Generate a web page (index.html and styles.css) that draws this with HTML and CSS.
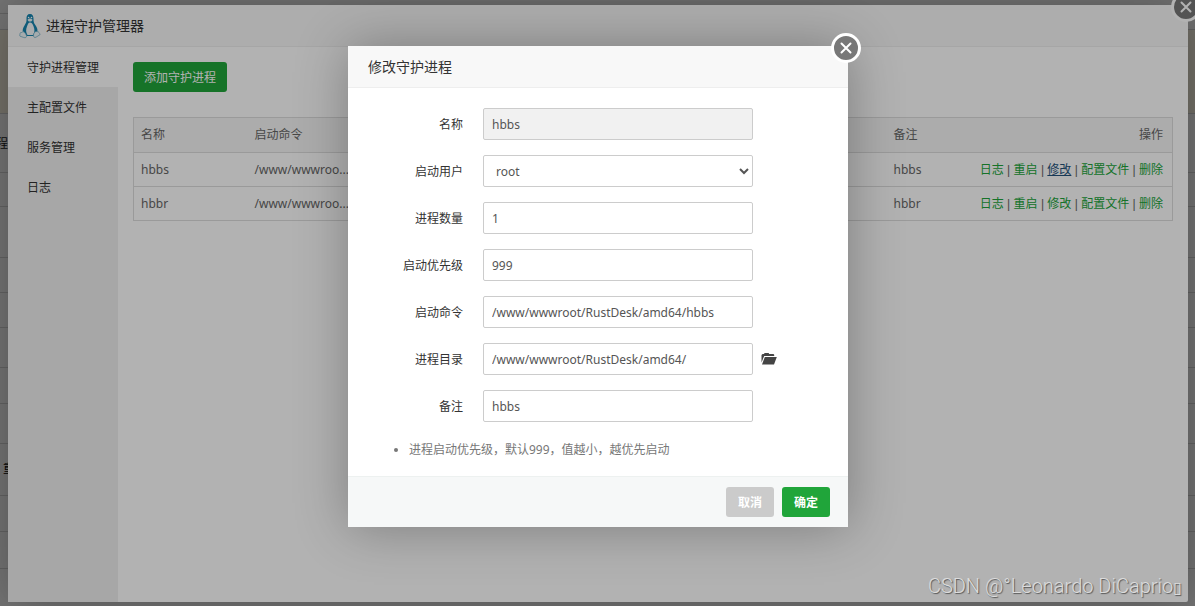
FILE: index.html
```html
<!DOCTYPE html>
<html lang="zh-CN">
<head>
<meta charset="utf-8">
<title>进程守护管理器</title>
<link rel="stylesheet" href="styles.css">
</head>
<body>
<div class="page" aria-hidden="true">
  <div class="row row-top"></div>
  <div class="row row-bar"></div>
  <div class="row row-notice"></div>
  <div class="row row-title">程</div>
  <div class="row row-34"></div>
  <div class="row row-51"></div>
  <div class="row row-35"></div>
  <div class="row row-35"></div>
  <div class="row row-40"></div>
  <div class="row row-36"></div>
  <div class="row row-40"></div>
  <div class="row row-52"><span class="row-icon">重</span></div>
  <div class="row row-36"></div>
  <div class="row row-37"></div>
</div>
<div class="shade"></div>

<section class="window">
  <header class="window-head">
    <svg class="logo" viewBox="0 0 22 26" width="22" height="26" aria-hidden="true">
      <path d="M11 1C8.300 1 7.300 3 7.500 6c.2 3-.5 4-2 6.500C4 15 3.200 17 4 19l2.500 4h9l2.700-4c.8-2-.1-4.500-1.700-6.700-1.700-2.400-2-3.300-2-6.300 0-3-.8-5-3.500-5z" fill="#1583ae"/>
      <path d="M11 9.500c-1.600 0-2 1.500-3 4-1.300 3-1.200 6 .5 8.500h5.500c1.800-2.500 1.800-5.500.6-8.500-.9-2.500-1.900-4-3.600-4z" fill="#f2f7fa"/>
      <path d="M8.500 6.700c1-.9 1.600-1.200 2.500-1.200s1.800.5 2.600 1.200c-.6 1.300-1.400 1.800-2.600 1.800s-2-.5-2.500-1.800z" fill="#e5f1f6"/>
      <circle cx="9.600" cy="4.500" r=".8" fill="#fff"/><circle cx="12.500" cy="4.500" r=".8" fill="#fff"/>
      <path d="M4 18.500c1.300.4 3 2.500 3.600 4.300.2 1.700-1.200 2.300-2.800 1.700L1 23.200c-.8-.6.200-1.700 0-3 .4-.9 1.700-.1 3-1.700zM18 18.500c-1.500-.5-3 .9-3.400 3-.5 2.200.6 3.700 2.400 2.700l4-2.500c.6-.7-.8-1.200-1-2.200-.3-.7-1-.9-2-1z" fill="#edf5f8" stroke="#65a9c2" stroke-width=".7"/>
    </svg>
    <h1 class="window-title">进程守护管理器</h1>
  </header>
  <div class="window-body">
    <nav class="side">
      <a class="side-item side-active" href="#guard">守护进程管理</a>
      <a class="side-item" href="#config">主配置文件</a>
      <a class="side-item" href="#service">服务管理</a>
      <a class="side-item" href="#log">日志</a>
    </nav>
    <main class="content">
      <button class="btn btn-add" type="button">添加守护进程</button>
      <table class="grid">
        <thead>
          <tr><th class="col-name">名称</th><th>启动命令</th><th class="col-note">备注</th><th class="col-ops">操作</th></tr>
        </thead>
        <tbody>
          <tr><td>hbbs</td><td>/www/wwwroo...</td><td>hbbs</td>
            <td class="ops"><a href="#log">日志</a> | <a href="#restart">重启</a> | <a class="current" href="#edit">修改</a> | <a href="#file">配置文件</a> | <a href="#delete">删除</a></td></tr>
          <tr><td>hbbr</td><td>/www/wwwroo...</td><td>hbbr</td>
            <td class="ops"><a href="#log">日志</a> | <a href="#restart">重启</a> | <a href="#edit">修改</a> | <a href="#file">配置文件</a> | <a href="#delete">删除</a></td></tr>
        </tbody>
      </table>
    </main>
  </div>
  <button class="close" type="button" aria-label="关闭">
    <svg viewBox="0 0 12 12" width="12" height="12"><path d="M1.500 1.500l9 9M10.500 1.500l-9 9" stroke="#fff" stroke-width="2" stroke-linecap="round"/></svg>
  </button>
</section>

<div class="overlay">
  <form class="dialog" role="dialog" aria-labelledby="dialog-title">
    <h2 class="dialog-title" id="dialog-title">修改守护进程</h2>
    <div class="dialog-body">
      <div class="line"><label for="name">名称</label><input class="field" id="name" type="text" value="hbbs" disabled></div>
      <div class="line"><label for="user">启动用户</label><select class="field" id="user"><option>root</option></select></div>
      <div class="line"><label for="count">进程数量</label><input class="field" id="count" type="text" value="1"></div>
      <div class="line"><label for="priority">启动优先级</label><input class="field" id="priority" type="text" value="999"></div>
      <div class="line"><label for="command">启动命令</label><input class="field" id="command" type="text" value="/www/wwwroot/RustDesk/amd64/hbbs"></div>
      <div class="line"><label for="folder">进程目录</label><input class="field" id="folder" type="text" value="/www/wwwroot/RustDesk/amd64/">
        <button class="browse" type="button" aria-label="选择目录"><svg viewBox="0 0 16 12" width="16" height="12"><path d="M.5 9.500V2l1-1H3l.6-1h4l.6 1h4.300l.7.800V3H3.200z" fill="#444"/><path d="M3.800 4h12L13 11.500H1z" fill="#444"/></svg></button>
      </div>
      <div class="line"><label for="note">备注</label><input class="field" id="note" type="text" value="hbbs"></div>
      <ul class="tips"><li>进程启动优先级，默认999，值越小，越优先启动</li></ul>
    </div>
    <footer class="dialog-foot">
      <button class="btn btn-strong btn-cancel" type="button">取消</button>
      <button class="btn btn-strong" type="submit">确定</button>
    </footer>
    <button class="close" type="button" aria-label="关闭">
      <svg viewBox="0 0 12 12" width="12" height="12"><path d="M1.500 1.500l9 9M10.500 1.500l-9 9" stroke="#fff" stroke-width="2" stroke-linecap="round"/></svg>
    </button>
  </form>
</div>
<div class="watermark">CSDN @°Leonardo DiCaprio<span class="box">▯</span></div>
</body>
</html>
```

FILE: styles.css
```css
* { box-sizing: border-box; }

body {
  margin: 0;
  height: 100vh;
  overflow: hidden;
  position: relative;
  background: #f0f0f0;
  color: #666;
  font: 12px/20px "Noto Sans", "Noto Sans CJK SC", sans-serif;
}

button, input, select { font: inherit; margin: 0; }
a { text-decoration: none; }

/* Page behind the windows */
.row { border-bottom: 1px solid #ccc; overflow: hidden; }
.row-top { height: 14px; }
.row-bar { height: 16px; }
.row-notice { height: 84px; background: #f0ead8; }
.row-title { height: 59px; padding-top: 20px; margin-left: -4px; color: #222; }
.row-34 { height: 34px; }
.row-35 { height: 35px; }
.row-36 { height: 36px; }
.row-37 { height: 37px; }
.row-40 { height: 40px; }
.row-51 { height: 51px; }
.row-52 { height: 52px; padding: 15px 3px; }
.row-icon { color: #000; }

.shade { position: absolute; inset: 0; background: rgba(0, 0, 0, .3); }

/* Manager window */
.window {
  position: absolute;
  inset: 5px 7px 4px 8px;
  display: flex;
  flex-direction: column;
  background: #fff;
  border-radius: 2px;
  box-shadow: 1px 1px 50px rgba(0, 0, 0, .3);
}
.window-head {
  display: flex;
  align-items: center;
  gap: 5px;
  height: 42px;
  padding-left: 11px;
  background: #f8f8f8;
  border-bottom: 1px solid #eee;
}
.window-title { margin: 0; font-size: 14px; font-weight: 400; color: #333; }
.window-body { flex: 1; display: flex; }
.side { width: 110px; background: #f0f0f0; }
.side-item { display: block; height: 40px; padding-left: 19px; line-height: 42px; color: #333; }
.side-active { background: #fff; }
.content { flex: 1; padding: 15px; }

.btn {
  height: 30px;
  padding: 2px 11px 0;
  border: 0;
  border-radius: 3px;
  background: #20a53a;
  color: #fff;
}
.btn-add { display: block; margin-bottom: 25px; }

.grid { width: 100%; table-layout: fixed; border-collapse: collapse; border: 1px solid #ddd; }
.grid th, .grid td {
  height: 34px;
  padding: 0 9px 0 7px;
  border-bottom: 1px solid #ddd;
  text-align: left;
  font-weight: 400;
  white-space: nowrap;
}
.grid th { height: 35px; background: #f6f6f6; }
.grid .col-name { width: 114px; }
.grid .col-note { width: 79px; }
.grid .col-ops { width: 207px; text-align: right; }
.grid .ops { font: 12px/20px "Liberation Sans", "Noto Sans CJK SC", sans-serif; text-align: right; }
.ops a { color: #20a53a; }
.ops .current { color: #23527c; text-decoration: underline; }

.close {
  position: absolute;
  top: -13px;
  right: -13px;
  width: 30px;
  height: 30px;
  display: grid;
  place-items: center;
  padding: 0;
  border: 3px solid #fff;
  border-radius: 50%;
  background: #787878;
}

/* Edit dialog */
.overlay {
  position: absolute;
  inset: 0;
  display: flex;
  justify-content: center;
  align-items: flex-start;
  padding: 46px 0 0 1px;
  background: rgba(0, 0, 0, .3);
}
.dialog {
  position: relative;
  width: 500px;
  background: #fff;
  box-shadow: 1px 1px 50px rgba(0, 0, 0, .3);
}
.dialog-title {
  margin: 0;
  padding-left: 20px;
  border-bottom: 1px solid #eee;
  background: #f8f8f8;
  color: #333;
  font-size: 14px;
  font-weight: 400;
  line-height: 41px;
}
.dialog-body { padding: 20px 20px 16px; }
.line { display: flex; align-items: center; margin-bottom: 15px; }
.line label { width: 95px; margin-right: 20px; padding-top: 2px; text-align: right; color: #333; }
.field {
  width: 270px;
  height: 32px;
  padding: 0 8px;
  border: 1px solid #ccc;
  border-radius: 2px;
  background: #fff;
  color: #555;
}
.field:disabled { background: #f1f1f1; }
.browse { display: flex; margin-left: 8px; padding: 0; border: 0; background: none; }
.tips { margin: 18px 0 0; padding-left: 41px; color: #777; }
.dialog-foot {
  display: flex;
  justify-content: flex-end;
  gap: 8px;
  padding: 10px 18px;
  border-top: 1px solid #edf1f0;
  background: #f6f8f8;
}
.btn-strong { width: 48px; font-weight: 700; }
.btn-cancel { background: #cbcbcb; }

.watermark {
  position: absolute;
  right: 13px;
  bottom: 6px;
  color: #dcdcdc;
  font: 300 20px/24px Roboto, sans-serif;
  text-shadow: 1px 1px 1px #555;
}
.box { font: 16px/24px "DejaVu Sans", sans-serif; }
```
